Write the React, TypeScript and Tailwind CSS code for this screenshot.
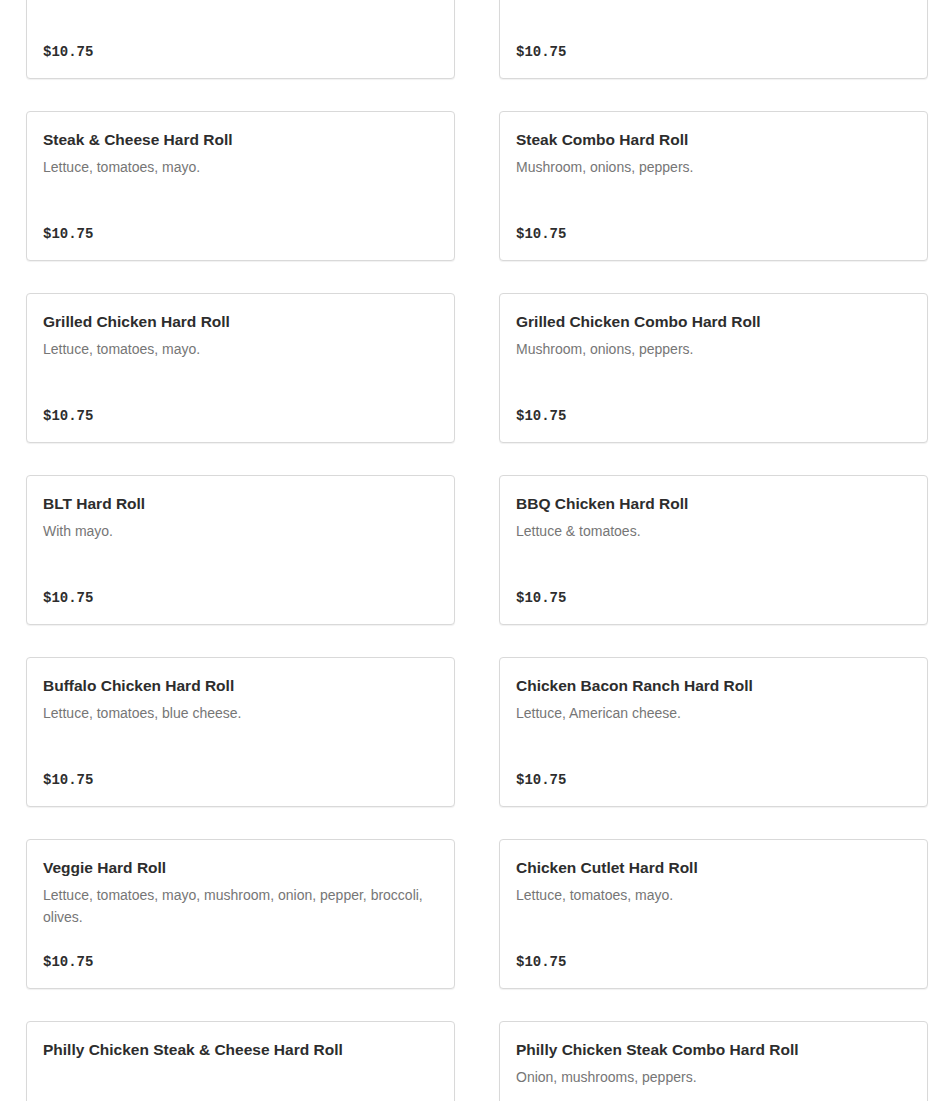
type MenuItem = {
  name: string;
  description?: string;
  price: string;
};

const items: MenuItem[] = [
  { name: "Cheese Hard Roll", description: "Lettuce, tomatoes, mayo.", price: "$10.75" },
  { name: "Steak Hard Roll", description: "Lettuce, tomatoes, mayo.", price: "$10.75" },
  { name: "Steak & Cheese Hard Roll", description: "Lettuce, tomatoes, mayo.", price: "$10.75" },
  { name: "Steak Combo Hard Roll", description: "Mushroom, onions, peppers.", price: "$10.75" },
  { name: "Grilled Chicken Hard Roll", description: "Lettuce, tomatoes, mayo.", price: "$10.75" },
  { name: "Grilled Chicken Combo Hard Roll", description: "Mushroom, onions, peppers.", price: "$10.75" },
  { name: "BLT Hard Roll", description: "With mayo.", price: "$10.75" },
  { name: "BBQ Chicken Hard Roll", description: "Lettuce & tomatoes.", price: "$10.75" },
  { name: "Buffalo Chicken Hard Roll", description: "Lettuce, tomatoes, blue cheese.", price: "$10.75" },
  { name: "Chicken Bacon Ranch Hard Roll", description: "Lettuce, American cheese.", price: "$10.75" },
  {
    name: "Veggie Hard Roll",
    description: "Lettuce, tomatoes, mayo, mushroom, onion, pepper, broccoli, olives.",
    price: "$10.75",
  },
  { name: "Chicken Cutlet Hard Roll", description: "Lettuce, tomatoes, mayo.", price: "$10.75" },
  { name: "Philly Chicken Steak & Cheese Hard Roll", price: "$10.75" },
  { name: "Philly Chicken Steak Combo Hard Roll", description: "Onion, mushrooms, peppers.", price: "$10.75" },
];

const MenuCard: React.FC<{ item: MenuItem }> = ({ item }) => {
  return (
    <div className="flex h-[150px] flex-col rounded-[4px] border border-[#d9d9d9] bg-white px-4 pb-4 pt-4 shadow-[0_1px_1px_rgba(0,0,0,0.06)]">
      <h3 className="text-[15.5px] font-semibold leading-6 text-[#2d2d2d]">{item.name}</h3>
      {item.description && (
        <p className="mt-1 text-[14px] leading-[22px] text-[#767676]">{item.description}</p>
      )}
      <p className="mt-auto font-['Liberation_Mono',monospace] text-[14px] font-bold leading-5 text-[#2d2d2d]">
        {item.price}
      </p>
    </div>
  );
};

export default function App() {
  return (
    <div className="h-[1101px] overflow-hidden bg-white font-['Liberation_Sans',Arial,sans-serif]">
      <div className="-mt-[71px] grid grid-cols-[429px_429px] gap-x-[44px] gap-y-8 pl-[26px]">
        {items.map((item) => (
          <MenuCard key={item.name} item={item} />
        ))}
      </div>
    </div>
  );
}
